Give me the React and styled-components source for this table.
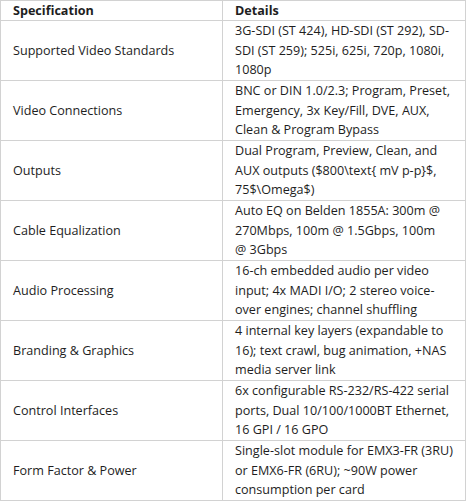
import styled, { createGlobalStyle } from 'styled-components'

const GlobalStyle = createGlobalStyle`
    html, body {
        margin: 0;
        padding: 0;
        background: #fff;
    }
    body {
        font-family: 'Open Sans', 'Noto Sans', sans-serif;
        color: #1e1e1e;
    }
`

const SpecTable = styled.table`
    width: 466px;
    border-collapse: collapse;
    table-layout: fixed;
    font-size: 12.6px;
    line-height: 19.5px;

    th, td {
        border: 1px solid #d2d2d2;
        padding: 0 7px 0 12px;
        text-align: left;
    }

    th {
        height: 19px;
        font-weight: 700;
        line-height: 19px;
        vertical-align: middle;
    }

    .name-col { width: 202px; }
`

const Row = styled.tr`
    height: 60px;
`

const Label = styled.td`
    vertical-align: middle;
`

const Detail = styled.td`
    vertical-align: top;
`

const specs = [
    ['Supported Video Standards', '3G-SDI (ST 424), HD-SDI (ST 292), SD-SDI (ST 259); 525i, 625i, 720p, 1080i, 1080p'],
    ['Video Connections', 'BNC or DIN 1.0/2.3; Program, Preset, Emergency, 3x Key/Fill, DVE, AUX, Clean & Program Bypass'],
    ['Outputs', 'Dual Program, Preview, Clean, and AUX outputs ($800\\text{ mV p-p}$, 75$\\Omega$)'],
    ['Cable Equalization', 'Auto EQ on Belden 1855A: 300m @ 270Mbps, 100m @ 1.5Gbps, 100m @\u00a03Gbps'],
    ['Audio Processing', '16-ch embedded audio per video input; 4x MADI I/O; 2 stereo voice-over engines; channel shuffling'],
    ['Branding & Graphics', '4 internal key layers (expandable to 16); text crawl, bug animation, +NAS media server link'],
    ['Control Interfaces', '6x configurable RS-232/RS-422 serial ports, Dual 10/100/1000BT Ethernet, 16 GPI / 16 GPO'],
    ['Form Factor & Power', 'Single-slot module for EMX3-FR (3RU) or EMX6-FR (6RU); ~90W power consumption per card'],
]

export default function App() {
    return (
        <>
            <GlobalStyle />
            <SpecTable>
                <thead>
                    <tr>
                        <th className='name-col'>Specification</th>
                        <th>Details</th>
                    </tr>
                </thead>
                <tbody>
                    {specs.map(([name, detail]) => (
                        <Row key={name}>
                            <Label>{name}</Label>
                            <Detail>{detail}</Detail>
                        </Row>
                    ))}
                </tbody>
            </SpecTable>
        </>
    )
}
